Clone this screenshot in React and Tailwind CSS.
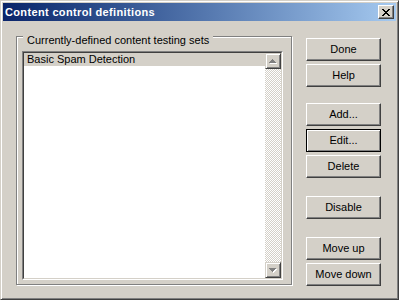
import React from 'react';

const font = "[font-family:'Liberation_Sans',Arial,sans-serif]";

const Button = ({ label, isDefault, className = '' }) => (
  <button
    className={
      'w-[75px] h-[23px] bg-[#d4d0c8] text-black text-[11px] leading-[13px] flex items-center justify-center ' +
      (isDefault
        ? 'border border-black shadow-[inset_1px_1px_0_#fff,inset_-1px_-1px_0_#808080] '
        : 'border border-t-white border-l-white border-r-[#404040] border-b-[#404040] shadow-[inset_-1px_-1px_0_#808080] ') +
      className
    }
  >
    {label}
  </button>
);

const ScrollArrow = ({ down }) => (
  <div className="w-[16px] h-[16px] bg-[#d4d0c8] border border-t-[#d4d0c8] border-l-[#d4d0c8] border-r-[#404040] border-b-[#404040] shadow-[inset_1px_1px_0_#fff,inset_-1px_-1px_0_#808080] flex items-center justify-center">
    <svg width="8" height="5" viewBox="0 0 8 5" shapeRendering="crispEdges">
      {down ? (
        <>
          <path d="M1 1h7v1h-1v1h-1v1h-1v1h-1v-1h-1v-1h-1v-1h-1z" fill="#fff" />
          <path d="M0 0h7v1h-1v1h-1v1h-1v1h-1v-1h-1v-1h-1v-1h-1z" fill="#808080" />
        </>
      ) : (
        <>
          <path d="M4 1h1v1h1v1h1v1h1v1h-7v-1h1v-1h1v-1h1z" fill="#fff" />
          <path d="M3 0h1v1h1v1h1v1h1v1h-7v-1h1v-1h1v-1h1z" fill="#808080" />
        </>
      )}
    </svg>
  </div>
);

export default function App() {
  return (
    <div className={'w-[399px] h-[300px] bg-[#d4d0c8] flex flex-col p-[2px] border border-t-[#d4d0c8] border-l-[#d4d0c8] border-r-[#404040] border-b-[#404040] shadow-[inset_1px_1px_0_#fff,inset_-1px_-1px_0_#808080] ' + font}>
      <div className="h-[18px] flex items-center bg-linear-to-r from-[#0a246a] to-[#a6caf0] pl-[2px] pr-[2px]">
        <span className="text-white font-bold text-[11px] leading-[13px] tracking-[0.35px] flex-1">Content control definitions</span>
        <div className="w-[16px] h-[14px] bg-[#d4d0c8] border border-t-white border-l-white border-r-[#404040] border-b-[#404040] shadow-[inset_-1px_-1px_0_#808080] flex items-center justify-center">
          <svg width="8" height="7" viewBox="0 0 8 7" shapeRendering="crispEdges">
            <path d="M0 0h2v1h1v1h2v-1h1v-1h2v1h-1v1h-1v1h-1v1h1v1h1v1h1v1h-2v-1h-1v-1h-2v1h-1v1h-2v-1h1v-1h1v-1h1v-1h-1v-1h-1v-1h-1z" fill="#000" />
          </svg>
        </div>
      </div>
      <div className="flex flex-1 pl-[13px] pt-[15px]">
        <div className="relative w-[276px] h-[249px] border border-[#808080] shadow-[inset_1px_1px_0_#fff,1px_1px_0_#fff]">
          <span className="absolute left-[6px] top-[-3px] px-[4px] bg-[#d4d0c8] text-black text-[11px] leading-[13px] whitespace-nowrap">
            Currently-defined content testing sets
          </span>
          <div className="ml-[5px] mt-[14px] w-[261px] h-[229px] border border-t-[#808080] border-l-[#808080] border-r-white border-b-white">
            <div className="w-full h-full border border-t-[#404040] border-l-[#404040] border-r-[#d4d0c8] border-b-[#d4d0c8] bg-white flex">
              <div className="flex-1">
                <div className="h-[13px] bg-[#d4d0c8] text-black text-[11px] leading-[13px] pl-[3px]">Basic Spam Detection</div>
              </div>
              <div className="w-[16px] flex flex-col">
                <ScrollArrow />
                <div className="flex-1 bg-[repeating-conic-gradient(#d4d0c8_0%_25%,#fff_0%_50%)] bg-[length:2px_2px]" />
                <ScrollArrow down />
              </div>
            </div>
          </div>
        </div>
        <div className="ml-[14px] mt-[2px] flex flex-col">
          <Button label="Done" />
          <Button label="Help" className="mt-[3px]" />
          <Button label="Add..." className="mt-[16px]" />
          <Button label="Edit..." isDefault className="mt-[3px]" />
          <Button label="Delete" className="mt-[3px]" />
          <Button label="Disable" className="mt-[18px]" />
          <Button label="Move up" className="mt-[18px]" />
          <Button label="Move down" className="mt-[3px]" />
        </div>
      </div>
    </div>
  );
}
